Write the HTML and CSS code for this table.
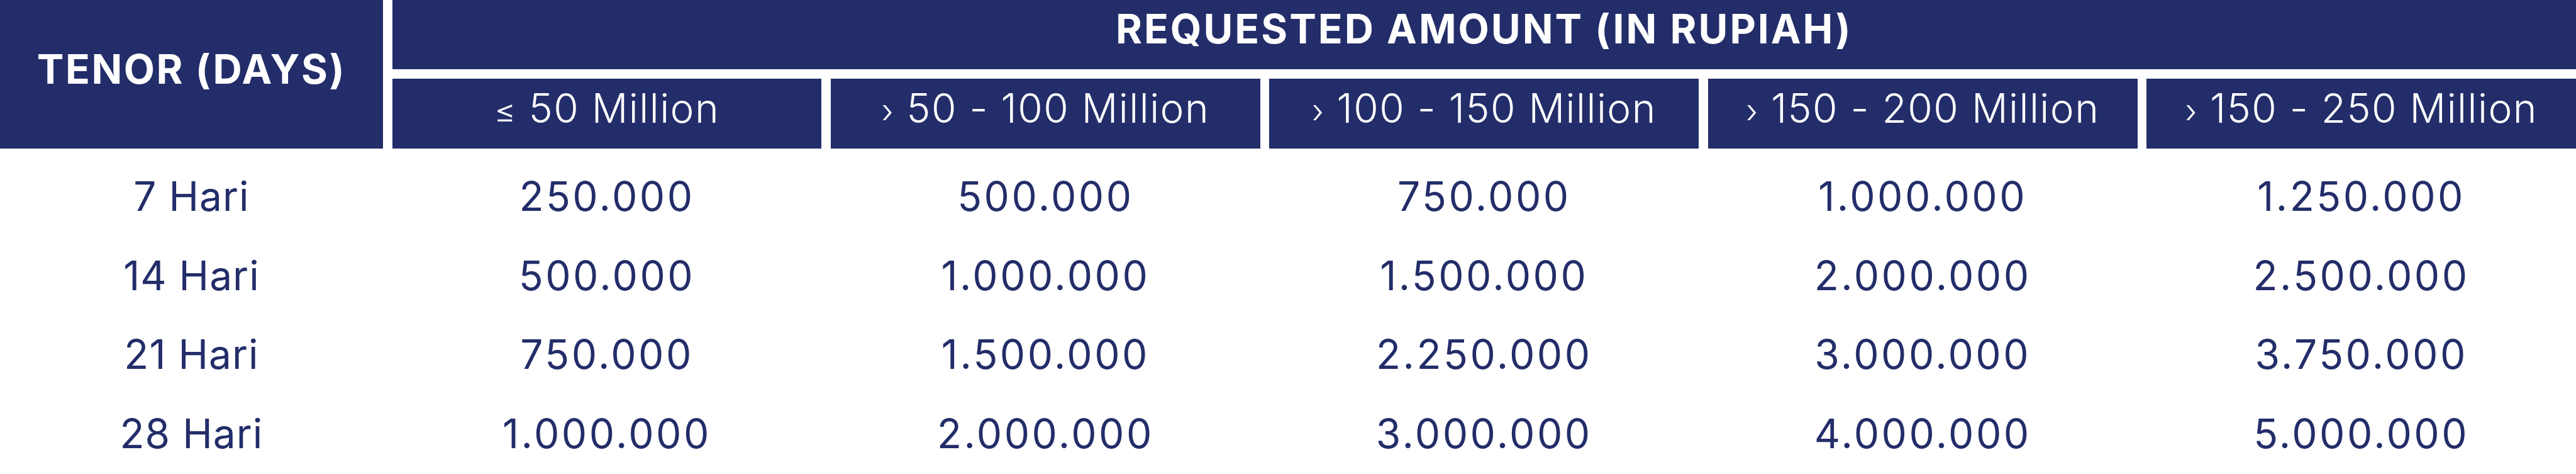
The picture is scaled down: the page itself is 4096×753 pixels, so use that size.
FILE: index.html
```html
<!DOCTYPE html>
<html lang="en">
<head>
<meta charset="utf-8">
<title>Tenor Fee Table</title>
<link rel="stylesheet" href="styles.css">
</head>
<body>
<div class="table">
  <div class="head">
    <div class="cell tenor">TENOR (DAYS)</div>
    <div class="cell group-title">REQUESTED AMOUNT (IN RUPIAH)</div>
    <div class="cell range"><span class="label"><span class="sym">≤</span> 50 Million</span></div>
    <div class="cell range"><span class="label"><span class="sym">›</span> 50 - 100 Million</span></div>
    <div class="cell range"><span class="label"><span class="sym">›</span> 100 - 150 Million</span></div>
    <div class="cell range"><span class="label"><span class="sym">›</span> 150 - 200 Million</span></div>
    <div class="cell range"><span class="label"><span class="sym">›</span> 150 - 250 Million</span></div>
  </div>
  <div class="body">
    <div class="cell day">7 Hari</div>
    <div class="cell num">250.000</div>
    <div class="cell num">500.000</div>
    <div class="cell num">750.000</div>
    <div class="cell num">1.000.000</div>
    <div class="cell num">1.250.000</div>

    <div class="cell day">14 Hari</div>
    <div class="cell num">500.000</div>
    <div class="cell num">1.000.000</div>
    <div class="cell num">1.500.000</div>
    <div class="cell num">2.000.000</div>
    <div class="cell num">2.500.000</div>

    <div class="cell day">21 Hari</div>
    <div class="cell num">750.000</div>
    <div class="cell num">1.500.000</div>
    <div class="cell num">2.250.000</div>
    <div class="cell num">3.000.000</div>
    <div class="cell num">3.750.000</div>

    <div class="cell day">28 Hari</div>
    <div class="cell num">1.000.000</div>
    <div class="cell num">2.000.000</div>
    <div class="cell num">3.000.000</div>
    <div class="cell num">4.000.000</div>
    <div class="cell num">5.000.000</div>
  </div>
</div>
</body>
</html>
```
FILE: styles.css
```css
html, body {
  margin: 0;
  padding: 0;
  background: #ffffff;
}

body {
  width: 4096px;
  height: 753px;
  overflow: hidden;
  font-family: Inter, "Liberation Sans", sans-serif;
  color: #232d69;
}

.table {
  width: 4096px;
}

.head,
.body {
  display: grid;
  grid-template-columns: 608.9px repeat(5, 682.67px);
  column-gap: 14.76px;
}

.head {
  grid-template-rows: 109.8px 110.7px;
  row-gap: 15.7px;
}

.body {
  grid-auto-rows: 125.5px;
  margin-top: 13.3px;
}

.cell {
  display: flex;
  align-items: center;
  justify-content: center;
  white-space: nowrap;
  font-size: 64px;
  line-height: 1;
}

.head .cell {
  background: #232d69;
  color: #ffffff;
  padding-bottom: 17px;
  box-sizing: border-box;
}

.tenor {
  grid-row: 1 / 3;
  grid-column: 1;
  font-weight: 700;
  letter-spacing: 2.5px;
}

.group-title {
  grid-row: 1;
  grid-column: 2 / 7;
  font-weight: 700;
  letter-spacing: 3px;
}

.range {
  grid-row: 2;
  font-weight: 300;
  letter-spacing: 1.5px;
}

.sym {
  font-size: 52px;
}

.day {
  font-weight: 400;
  letter-spacing: 1px;
}

.num {
  font-weight: 400;
  letter-spacing: 3.5px;
}
```
